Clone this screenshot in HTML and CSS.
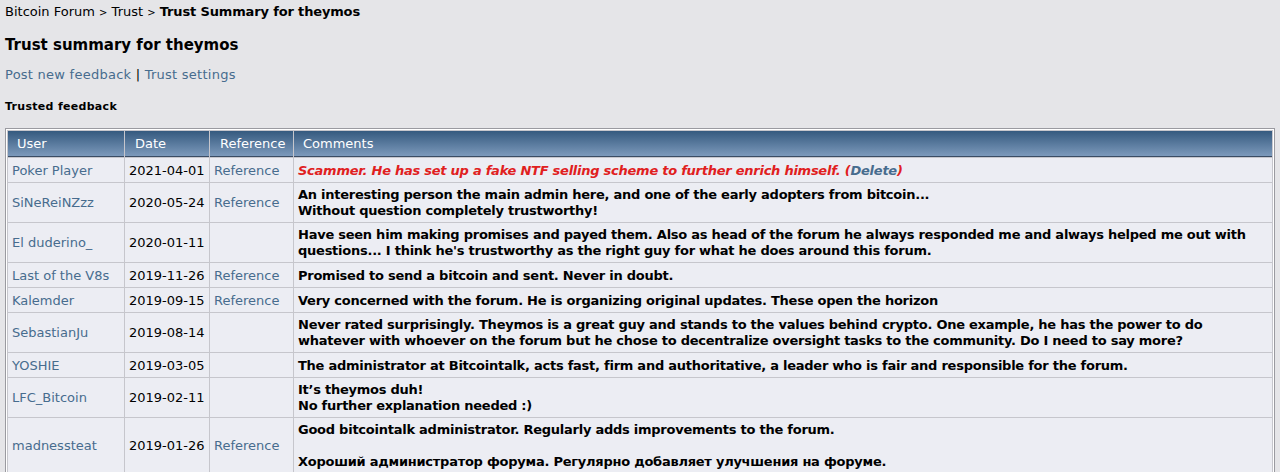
FILE: index.html
```html
<!DOCTYPE html>
<html lang="en">
<head>
    <meta charset="UTF-8">
    <title>Trust Summary for theymos</title>
    <link rel="stylesheet" href="styles.css">
</head>
<body>
    <div class="nav">
        <a href="#">Bitcoin Forum</a> <span class="sep">&gt;</span> <a href="#">Trust</a> <span class="sep">&gt;</span> <b>Trust Summary for theymos</b>
    </div>

    <h1 class="title">Trust summary for theymos</h1>

    <div class="actions">
        <a href="#">Post new feedback</a> | <a href="#">Trust settings</a>
    </div>

    <h2 class="section">Trusted feedback</h2>

    <div class="tborder">
        <table class="feedback">
            <tr>
                <th class="c-user">User</th>
                <th class="c-date">Date</th>
                <th class="c-ref">Reference</th>
                <th class="c-comment">Comments</th>
            </tr>
            <tr>
                <td><a href="#">Poker Player</a></td>
                <td>2021-04-01</td>
                <td><a href="#">Reference</a></td>
                <td class="comment negative">Scammer. He has set up a fake NTF selling scheme to further enrich himself. (<a href="#">Delete</a>)</td>
            </tr>
            <tr>
                <td><a href="#">SiNeReiNZzz</a></td>
                <td>2020-05-24</td>
                <td><a href="#">Reference</a></td>
                <td class="comment">An interesting person the main admin here, and one of the early adopters from bitcoin...<br>Without question completely trustworthy!</td>
            </tr>
            <tr>
                <td><a href="#">El duderino_</a></td>
                <td>2020-01-11</td>
                <td></td>
                <td class="comment">Have seen him making promises and payed them. Also as head of the forum he always responded me and always helped me out with questions... I think he's trustworthy as the right guy for what he does around this forum.</td>
            </tr>
            <tr>
                <td><a href="#">Last of the V8s</a></td>
                <td>2019-11-26</td>
                <td><a href="#">Reference</a></td>
                <td class="comment">Promised to send a bitcoin and sent. Never in doubt.</td>
            </tr>
            <tr>
                <td><a href="#">Kalemder</a></td>
                <td>2019-09-15</td>
                <td><a href="#">Reference</a></td>
                <td class="comment">Very concerned with the forum. He is organizing original updates. These open the horizon</td>
            </tr>
            <tr>
                <td><a href="#">SebastianJu</a></td>
                <td>2019-08-14</td>
                <td></td>
                <td class="comment">Never rated surprisingly. Theymos is a great guy and stands to the values behind crypto. One example, he has the power to do whatever with whoever on the forum but he chose to decentralize oversight tasks to the community. Do I need to say more?</td>
            </tr>
            <tr>
                <td><a href="#">YOSHIE</a></td>
                <td>2019-03-05</td>
                <td></td>
                <td class="comment">The administrator at Bitcointalk, acts fast, firm and authoritative, a leader who is fair and responsible for the forum.</td>
            </tr>
            <tr>
                <td><a href="#">LFC_Bitcoin</a></td>
                <td>2019-02-11</td>
                <td></td>
                <td class="comment">It’s theymos duh!<br>No further explanation needed :)</td>
            </tr>
            <tr>
                <td><a href="#">madnessteat</a></td>
                <td>2019-01-26</td>
                <td><a href="#">Reference</a></td>
                <td class="comment">Good bitcointalk administrator. Regularly adds improvements to the forum.<br><br>Хороший администратор форума. Регулярно добавляет улучшения на форуме.</td>
            </tr>
        </table>
    </div>
</body>
</html>
```

FILE: styles.css
```css
body {
    font-family: "DejaVu Sans", Verdana, sans-serif;
    font-size: 13px;
    line-height: 16px;
    background-color: #e5e5e8;
    color: #000;
    margin: 0;
    padding: 4px 5px;
}
a {
    color: #476c8e;
    text-decoration: none;
}
.nav a {
    color: #000;
}
.nav .sep {
    font-size: 10px;
}
.nav b {
    letter-spacing: -0.15px;
}
.title {
    font-size: 15px;
    font-weight: bold;
    margin: 14px 0 0;
    line-height: 20px;
}
.actions {
    margin-top: 12px;
    letter-spacing: 0.25px;
}
.section {
    font-size: 11px;
    font-weight: bold;
    margin: 17px 0 0;
    line-height: 14px;
    letter-spacing: 0.3px;
}
.tborder {
    margin-top: 14px;
    border: 1px solid #9a9aa0;
    padding: 1px;
    background-color: #fff;
}
.feedback {
    width: 100%;
    border-collapse: separate;
    border-spacing: 1px;
    background-color: #c6c6cc;
}
.feedback tr {
    height: 24px;
}
.feedback th {
    font-weight: normal;
    text-align: left;
    color: #fff;
    padding: 5px 4px 4px 10px;
    background: linear-gradient(to bottom, #355a7f, #7c99bb);
    border-bottom: 1px solid #3a4c64;
}
.feedback th.c-user {
    width: 103px;
    padding-left: 9px;
}
.feedback th.c-date {
    width: 70px;
}
.feedback th.c-ref {
    width: 69px;
}
.feedback th.c-comment {
    padding-left: 9px;
}
.feedback td {
    background-color: #ecedf3;
    padding: 4px 4px 3px;
    vertical-align: middle;
}
.comment {
    font-weight: bold;
    letter-spacing: -0.25px;
}
.negative {
    color: #e0201e;
    font-style: italic;
}
```
